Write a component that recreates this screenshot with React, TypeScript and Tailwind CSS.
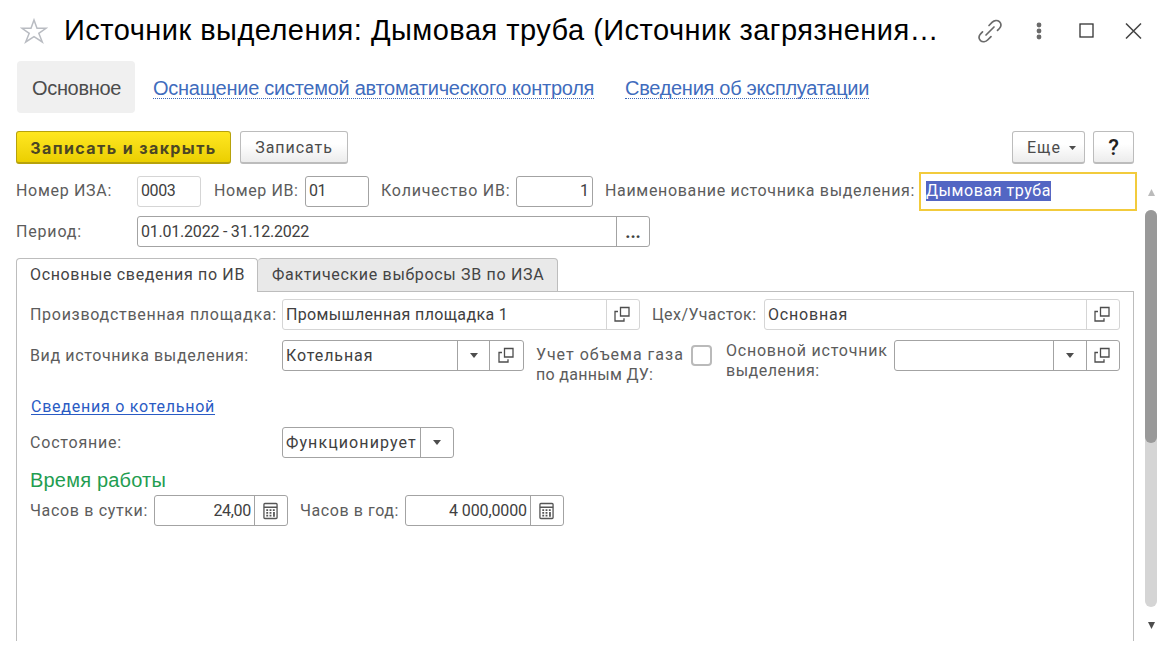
import { useState } from "react";
import type { ReactNode } from "react";
import clsx from "clsx";

const StarIcon = () => (
    <svg width="28" height="26" viewBox="0 0 28 26" fill="none" stroke="#b9bcc2" strokeWidth="1.5">
        <path d="M14 2 L17 10.3 H26 L18.8 15.3 L22.3 24 L14 18.6 L5.7 24 L9.2 15.3 L2 10.3 H11 Z" />
    </svg>
);

const LinkIcon = () => (
    <svg width="26" height="26" viewBox="0 0 26 26" fill="none" stroke="#6a6a6a" strokeWidth="1.7" strokeLinecap="round">
        <path d="M9 17 L17 9" />
        <path d="M12 7.5 L15.3 4.2 C17.2 2.3 20.3 1.8 22.4 3.6 C24.6 5.7 24.4 8.5 22.4 10.5 L20.5 12.4" />
        <path d="M5.5 13.9 L3.6 15.8 C1.6 17.8 1.4 20.6 3.5 22.6 C5.6 24.4 8.7 23.9 10.6 22 L14 18.6" />
    </svg>
);

const OpenIcon = () => (
    <svg className="-ml-0.5 -mt-0.5" width="16" height="16" viewBox="0 0 16 16" fill="none" stroke="#4d4d4d" strokeWidth="1.3">
        <path d="M6.5 1.5 H15 V10 H6.5 Z" />
        <path d="M4 5.5 H1 V15 H10 V12.3" />
    </svg>
);

const CalcIcon = () => (
    <svg className="-ml-px" width="15" height="18" viewBox="0 0 16 18" fill="none" stroke="#555" strokeWidth="1.4">
        <rect x="1" y="1" width="14" height="16" rx="1" />
        <path d="M1 5 H15" />
        <path d="M3.5 8 H12.5 M3.5 11 H9.5 M3.5 14 H9.5" strokeWidth="1.8" strokeDasharray="2 1.5" />
        <path d="M11.7 10 V15" strokeWidth="1.9" />
    </svg>
);

const Caret = ({ small = false }: { small?: boolean }) => (
    <svg width={small ? 7 : 8} height={small ? 4 : 5} viewBox="0 0 9 6" preserveAspectRatio="none" fill="#4d4d4d">
        <path d="M0 0 H9 L4.5 6 Z" />
    </svg>
);

type FieldProps = {
    value?: string;
    className: string;
    text?: string;
    muted?: boolean;
    right?: boolean;
    children?: ReactNode;
};

function Field({ value = "", className, text, muted, right, children }: FieldProps) {
    return (
        <div
            className={clsx(
                "flex h-[31px] shrink-0 overflow-hidden rounded-[3px] border bg-white text-[#404040]",
                muted ? "border-[#d5d5d5] divide-[#d5d5d5]" : "border-[#a3a3a3] divide-[#a3a3a3]",
                "divide-x",
                className
            )}
        >
            <div className={clsx("flex min-w-0 flex-1 items-center whitespace-nowrap px-[3px]", right && "justify-end", text)}>
                <span>{value}</span>
            </div>
            {children}
        </div>
    );
}

const Cell = ({ children, className = "w-8" }: { children: ReactNode; className?: string }) => (
    <button className={clsx("flex shrink-0 items-center justify-center", className)}>{children}</button>
);

const Label = ({ children, className }: { children: ReactNode; className: string }) => (
    <label className={clsx("shrink-0 whitespace-nowrap text-[#5c5c5c]", className)}>{children}</label>
);

export default function App() {
    const [checked, setChecked] = useState(false);

    return (
        <div className="h-[657px] w-[1159px] overflow-hidden bg-white font-['Roboto',sans-serif] text-base leading-5 text-[#4c4c4c]">
            <header className="flex h-[61px] items-center pl-5">
                <StarIcon />
                <h1 className="-mt-0.5 ml-4 w-[890px] whitespace-nowrap font-['Liberation_Sans',sans-serif] text-[29px] leading-9 tracking-[0.48px] text-black">
                    Источник выделения: Дымовая труба (Источник загрязнения…
                </h1>
                <div className="ml-[23px] flex items-center">
                    <LinkIcon />
                    <svg className="ml-[33px]" width="6" height="18" fill="#6a6a6a">
                        <circle cx="3" cy="3" r="2.4" />
                        <circle cx="3" cy="9" r="2.4" />
                        <circle cx="3" cy="15" r="2.4" />
                    </svg>
                    <svg className="ml-[37px]" width="15" height="15" fill="none" stroke="#333" strokeWidth="1.3">
                        <rect x="1" y="1" width="13" height="13" />
                    </svg>
                    <svg className="ml-[31px]" width="17" height="16" fill="none" stroke="#444" strokeWidth="1.5">
                        <path d="M1 0.5 L16 15.5 M16 0.5 L1 15.5" />
                    </svg>
                </div>
            </header>

            <nav className="flex h-[52px] pl-[17px] font-['Liberation_Sans',sans-serif] text-[20px] leading-6">
                <div className="flex w-[118px] items-center rounded-[4px] bg-[#f0f0f0] pl-[15px] pt-0.5 tracking-[-0.33px]">Основное</div>
                <a className="ml-[18px] mt-[15px] h-[23px] w-[441px] whitespace-nowrap border-b border-dotted border-[#3c68b8] tracking-[-0.27px] text-[#3f6cbd]">
                    Оснащение системой автоматического контроля
                </a>
                <a className="ml-[31px] mt-[15px] h-[23px] w-[244px] whitespace-nowrap border-b border-dotted border-[#3c68b8] tracking-[-0.29px] text-[#3f6cbd]">
                    Сведения об эксплуатации
                </a>
            </nav>

            <div className="mt-[18px] flex h-[33px] pl-4 pr-[25px]">
                <button className="w-[215px] whitespace-nowrap rounded-[3px] border border-b-2 border-[#b7a20b] bg-linear-to-b from-[#ffe71f] to-[#ebcf00] pt-0.5 font-['Inter',sans-serif] font-bold tracking-[1.4px] text-[#4b4624]">
                    Записать и закрыть
                </button>
                <button className="ml-[9px] w-[108px] rounded-[3px] border border-b-2 border-[#bcbcbc] bg-linear-to-b from-white from-40% to-[#ececec] pt-0.5 tracking-[0.95px]">
                    Записать
                </button>
                <button className="ml-auto flex w-[73px] items-center rounded-[3px] border border-b-2 border-[#bcbcbc] bg-linear-to-b from-white from-40% to-[#ececec] pl-3.5 pt-0.5 tracking-[1.03px]">
                    Еще
                    <span className="ml-2"><Caret small /></span>
                </button>
                <button className="ml-2 w-[41px] rounded-[3px] border border-b-2 border-[#bcbcbc] bg-linear-to-b from-white from-40% to-[#ececec] pt-0.5 text-[22px] font-medium text-[#222]">
                    ?
                </button>
            </div>

            <div className="flex">
                <main className="w-[1137px] shrink-0 pl-4">
                    <div className="mt-[7px] flex h-10 items-center">
                        <Label className="w-[121px] tracking-[0.69px]">Номер ИЗА:</Label>
                        <Field className="w-16" value="0003" text="tracking-[-0.4px]" muted />
                        <Label className="ml-[13px] w-[91px] tracking-[0.6px]">Номер ИВ:</Label>
                        <Field className="w-16" value="01" text="tracking-[-0.4px]" />
                        <Label className="ml-3 w-[135px] tracking-[0.8px]">Количество ИВ:</Label>
                        <Field className="w-[77px]" value="1" right />
                        <Label className="ml-3 w-[314px] tracking-[0.67px]">Наименование источника выделения:</Label>
                        <div className="flex h-[39px] w-[218px] items-center border-2 border-[#f2cb3c] bg-white pl-[5px]">
                            <span className="h-5 w-[125px] whitespace-nowrap bg-[#5366c3] tracking-[0.56px] text-white">Дымовая труба</span>
                        </div>
                    </div>

                    <div className="mt-[5px] flex h-[31px] items-center">
                        <Label className="w-[121px] tracking-[0.83px]">Период:</Label>
                        <Field className="w-[513px]" value="01.01.2022 - 31.12.2022" text="tracking-[-0.22px]">
                            <Cell><span className="pt-px text-lg font-bold leading-5">...</span></Cell>
                        </Field>
                    </div>

                    <div className="relative z-10 mt-[11px] flex h-[34px] text-[#444]">
                        <div className="w-[242px] whitespace-nowrap rounded-t-[4px] border border-b-0 border-[#bdbdbd] bg-white pl-[13px] pt-1.5 tracking-[0.65px]">
                            Основные сведения по ИВ
                        </div>
                        <div className="w-[300px] whitespace-nowrap rounded-t-[4px] border border-l-0 border-[#bdbdbd] bg-[#e9e9e9] pl-3.5 pt-1.5 tracking-[0.67px]">
                            Фактические выбросы ЗВ по ИЗА
                        </div>
                        <div className="w-[576px] border-b border-[#bdbdbd]" />
                    </div>

                    <section className="h-[349px] w-[1118px] border-x border-[#bdbdbd] pl-[13px] pt-[7px]">
                        <div className="flex h-[31px] items-center">
                            <Label className="w-[252px] tracking-[0.71px]">Производственная площадка:</Label>
                            <Field className="w-[358px]" value="Промышленная площадка 1" text="tracking-[0.36px]" muted>
                                <Cell><OpenIcon /></Cell>
                            </Field>
                            <Label className="ml-3 w-28 tracking-[0.42px]">Цех/Участок:</Label>
                            <Field className="w-[356px]" value="Основная" text="tracking-[0.8px]" muted>
                                <Cell><OpenIcon /></Cell>
                            </Field>
                        </div>

                        <div className="mt-2.5 flex h-[31px]">
                            <Label className="w-[252px] pt-1.5 tracking-[0.62px]">Вид источника выделения:</Label>
                            <Field className="w-[242px]" value="Котельная" text="tracking-[0.9px]">
                                <Cell><Caret /></Cell>
                                <Cell className="w-[33px]"><OpenIcon /></Cell>
                            </Field>
                            <Label className="ml-3 w-[155px] pt-[5px] tracking-[1px]">
                                Учет объема газа
                                <br />
                                <span className="tracking-[0.3px]">по данным ДУ:</span>
                            </Label>
                            <button
                                aria-label="Учет объема газа по данным ДУ"
                                aria-pressed={checked}
                                onClick={() => setChecked((prev) => !prev)}
                                className="mt-[5px] size-[21px] shrink-0 rounded-[4px] border-2 border-[#bababa] bg-white text-sm leading-4"
                            >
                                {checked ? "✓" : ""}
                            </button>
                            <Label className="ml-3.5 w-[168px] pt-px tracking-[0.78px]">
                                Основной источник
                                <br />
                                <span className="tracking-[0.5px]">выделения:</span>
                            </Label>
                            <Field className="w-[226px]">
                                <Cell className="w-[33px]"><Caret /></Cell>
                                <Cell><OpenIcon /></Cell>
                            </Field>
                        </div>

                        <a className="ml-px mt-[26px] block w-fit tracking-[0.75px] text-[#2a5bc4] underline underline-offset-2">Сведения о котельной</a>

                        <div className="mt-2.5 flex h-[31px] items-center">
                            <Label className="w-[252px] tracking-[0.8px]">Состояние:</Label>
                            <Field className="w-[172px]" value="Функционирует" text="tracking-[1.1px]">
                                <Cell><Caret /></Cell>
                            </Field>
                        </div>

                        <h2 className="mt-2.5 font-['Liberation_Sans',sans-serif] text-[20px] leading-6 tracking-[0.2px] text-[#1f9d51]">Время работы</h2>

                        <div className="mt-[3px] flex h-[31px] items-center">
                            <Label className="w-[124px] tracking-[0.66px]">Часов в сутки:</Label>
                            <Field className="w-[134px]" value="24,00" text="tracking-[-0.3px]" right>
                                <Cell><CalcIcon /></Cell>
                            </Field>
                            <Label className="ml-3 w-[105px] tracking-[0.58px]">Часов в год:</Label>
                            <Field className="w-[159px]" value="4 000,0000" text="tracking-[-0.11px]" right>
                                <Cell><CalcIcon /></Cell>
                            </Field>
                        </div>
                    </section>
                </main>

                <aside className="ml-2 flex w-3 flex-col items-center pt-[25px]">
                    <svg width="7" height="7" fill="#bbb">
                        <path d="M3.5 0 L7 7 H0 Z" />
                    </svg>
                    <div className="mt-[14px] h-[397px] w-3 rounded-full bg-[#d5d5d5]">
                        <div className="h-[233px] rounded-full bg-[#999]" />
                    </div>
                    <svg className="mt-[15px]" width="7" height="7" fill="#4d4d4d">
                        <path d="M0 0 H7 L3.5 7 Z" />
                    </svg>
                </aside>
            </div>
        </div>
    );
}
